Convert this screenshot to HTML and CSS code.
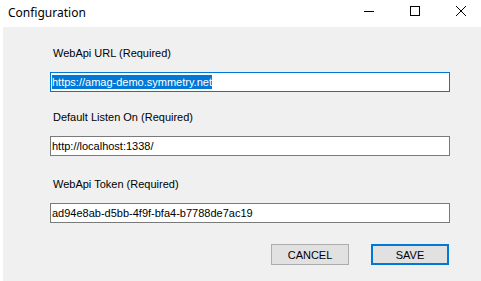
FILE: index.html
```html
<!DOCTYPE html>
<html>
<head>
<meta charset="utf-8">
<link rel="stylesheet" href="styles.css">
</head>
<body>
<div class="window">
  <div class="titlebar">
    <span class="title">Configuration</span>
    <div class="controls">
      <div class="ctrl"><svg width="10" height="10" viewBox="0 0 10 10"><path d="M0 5.5H10" stroke="#000" stroke-width="1"/></svg></div>
      <div class="ctrl"><svg width="10" height="10" viewBox="0 0 10 10"><rect x="0.5" y="0.5" width="9" height="9" fill="none" stroke="#000" stroke-width="1"/></svg></div>
      <div class="ctrl"><svg width="10" height="10" viewBox="0 0 10 10"><path d="M0 0L10 10M10 0L0 10" stroke="#000" stroke-width="1"/></svg></div>
    </div>
  </div>
  <div class="client">
    <div class="field f1">
      <div class="label">WebApi URL (Required)</div>
      <div class="textbox focused"><span class="sel">https://amag-demo.symmetry.net</span></div>
    </div>
    <div class="field f2">
      <div class="label">Default Listen On (Required)</div>
      <div class="textbox">http://localhost:1338/</div>
    </div>
    <div class="field f3">
      <div class="label">WebApi Token (Required)</div>
      <div class="textbox">ad94e8ab-d5bb-4f9f-bfa4-b7788de7ac19</div>
    </div>
    <div class="buttons">
      <div class="btn">CANCEL</div>
      <div class="btn default">SAVE</div>
    </div>
  </div>
</div>
</body>
</html>
```

FILE: styles.css
```css
html, body {
  margin: 0;
  padding: 0;
  width: 481px;
  height: 281px;
  overflow: hidden;
  background: #ffffff;
}
.window {
  width: 481px;
  height: 281px;
  display: flex;
  flex-direction: column;
}
.titlebar {
  height: 27px;
  display: flex;
  align-items: center;
  background: #ffffff;
  flex: none;
}
.title {
  font-family: "Noto Sans", "Open Sans", sans-serif;
  font-size: 12px;
  color: #000;
  padding-left: 8px;
  padding-bottom: 3px;
}
.controls {
  margin-left: auto;
  margin-right: -3px;
  display: flex;
  height: 27px;
}
.ctrl {
  width: 46px;
  height: 22px;
  display: flex;
  align-items: center;
  justify-content: center;
}
.ctrl svg {
  display: block;
}
.client {
  flex: 1;
  margin-left: 3px;
  background: #f0f0f0;
  padding: 20px 0 0 47px;
  font-family: "Liberation Sans", Arial, sans-serif;
  font-size: 11px;
  color: #000;
}
.field {
  display: flex;
  flex-direction: column;
}
.f1 { margin-bottom: 19px; }
.f2 { margin-bottom: 22px; }
.f3 { margin-bottom: 21px; }
.label {
  height: 13px;
  line-height: 13px;
  margin-left: 3px;
  margin-bottom: 12px;
}
.textbox {
  box-sizing: border-box;
  width: 400px;
  height: 20px;
  border: 1px solid #7a7a7a;
  background: #ffffff;
  padding-left: 1px;
  display: flex;
  align-items: center;
  white-space: nowrap;
}
.textbox.focused {
  border-color: #0078d7;
}
.sel {
  background: #0078d7;
  color: #ffffff;
  line-height: 14px;
  height: 14px;
}
.buttons {
  width: 399px;
  display: flex;
  justify-content: flex-end;
  gap: 22px;
}
.btn {
  box-sizing: border-box;
  width: 78px;
  height: 21px;
  border: 1px solid #adadad;
  background: #e1e1e1;
  display: flex;
  align-items: center;
  justify-content: center;
}
.btn.default {
  border: 2px solid #0078d7;
}
```
